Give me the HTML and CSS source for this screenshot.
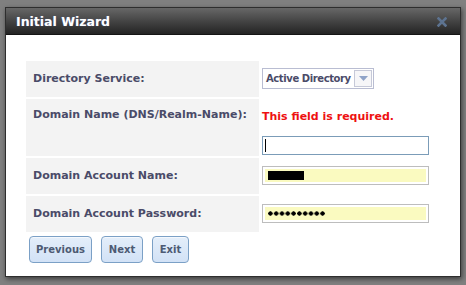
FILE: index.html
```html
<!DOCTYPE html>
<html>
<head>
<meta charset="utf-8">
<link rel="stylesheet" href="styles.css">
</head>
<body>
<div class="dialog">
  <div class="titlebar">
    <span class="title">Initial Wizard</span>
    <svg class="close" width="10" height="10" viewBox="0 0 10 10"><path d="M1.5 1.5 L8.5 8.5 M8.5 1.5 L1.5 8.5" stroke="#5d7390" stroke-width="2.6" stroke-linecap="square"/></svg>
  </div>
  <div class="body">
    <div class="form">
      <div class="label">Directory Service:</div>
      <div class="field f1">
        <div class="select"><span class="sel-text">Active Directory</span><span class="sel-btn"><svg width="9" height="5" viewBox="0 0 9 5"><path d="M0 0 H9 L4.5 5 Z" fill="#8fa3c8"/></svg></span></div>
      </div>
      <div class="label l2">Domain Name (DNS/Realm-Name):</div>
      <div class="field f2">
        <div class="error">This field is required.</div>
        <div class="input focus"><span class="caret"></span></div>
      </div>
      <div class="label">Domain Account Name:</div>
      <div class="field f3">
        <div class="input auto"><span class="inner"><span class="redact"></span></span></div>
      </div>
      <div class="label">Domain Account Password:</div>
      <div class="field f3">
        <div class="input auto"><span class="inner"><span class="dots" aria-label="••••••••••"></span></span></div>
      </div>
    </div>
    <div class="buttons">
      <button class="btn b-prev">Previous</button>
      <button class="btn b-next">Next</button>
      <button class="btn b-exit">Exit</button>
    </div>
  </div>
</div>
</body>
</html>
```
FILE: styles.css
```css
html, body { margin: 0; padding: 0; }
body {
  background: #808080;
  width: 466px;
  height: 285px;
  padding: 7px 0 0 5px;
  box-sizing: border-box;
  font-family: "DejaVu Sans", Verdana, sans-serif;
  overflow: hidden;
}
.dialog {
  width: 456px;
  height: 270px;
  background: #fff;
  border: 1px solid #2e2e2e;
  box-sizing: border-box;
  box-shadow: 1px 2px 5px rgba(0,0,0,0.55);
  display: flex;
  flex-direction: column;
}
.titlebar {
  height: 26px;
  background: linear-gradient(#676767, #414141 55%, #242424);
  border-bottom: 1px solid #151515;
  display: flex;
  align-items: center;
  justify-content: space-between;
  padding: 0 13px 0 10px;
}
.title {
  color: #fff;
  font-weight: bold;
  font-size: 12.5px;
  text-shadow: 0 0 1px rgba(120,150,255,0.5);
}
.close { display: block; margin-top: 1px; }
.body {
  padding: 26px 0 0 20px;
}
.form {
  display: grid;
  grid-template-columns: 233px 175px;
  grid-template-rows: 36px 57px 36px 36px;
  row-gap: 2px;
}
.label {
  background: #f3f3f3;
  color: #4a4b68;
  font-weight: bold;
  font-size: 11px;
  padding: 11px 7px 0;
  line-height: 14px;
}
.label.l2 { padding-top: 9px; }
.field { padding-left: 3px; }
.f1 { padding-top: 7px; }
.f2 { padding-top: 11px; }
.f3 { padding-top: 8px; }
.select {
  width: 112px;
  height: 21px;
  box-sizing: border-box;
  border: 1px solid #b9bdd2;
  display: flex;
  align-items: center;
  justify-content: space-between;
  padding: 0 1px 0 3px;
}
.sel-text {
  font-size: 10px;
  letter-spacing: -0.4px;
  font-weight: bold;
  color: #4a4b68;
  white-space: nowrap;
}
.sel-btn {
  width: 18px;
  height: 17px;
  box-sizing: border-box;
  border: 1px solid #c6c9d8;
  background: #f6f6f8;
  display: flex;
  align-items: center;
  justify-content: center;
}
.sel-btn svg { display: block; }
.error {
  color: #ee1111;
  font-weight: bold;
  font-size: 11px;
  line-height: 14px;
  height: 14px;
  margin-bottom: 12px;
}
.input {
  width: 167px;
  height: 19px;
  box-sizing: border-box;
  border: 1px solid #bdbdbd;
  background: #fff;
  display: flex;
  align-items: center;
}
.input.focus { border-color: #7b9cb8; }
.caret {
  display: block;
  width: 1px;
  height: 13px;
  background: #000;
  margin-left: 2px;
}
.input.auto { padding: 2px; }
.inner {
  flex: 1;
  height: 100%;
  background: #fafac0;
  display: flex;
  align-items: center;
  padding-left: 3px;
}
.redact {
  display: block;
  width: 36px;
  height: 9px;
  background: #000;
}
.dots {
  display: block;
  width: 58px;
  height: 5px;
  background: radial-gradient(circle at 2.4px 2.5px, #000 1.9px, transparent 2.4px) 0 0 / 5.8px 5px repeat-x;
}
.buttons {
  display: flex;
  gap: 9px;
  padding: 4px 0 0 3px;
}
.btn {
  height: 27px;
  box-sizing: border-box;
  border: 1px solid #7ba0c6;
  border-radius: 4px;
  background: linear-gradient(#e4eefa, #d2e2f6);
  color: #4d5a73;
  font-family: "DejaVu Sans", Verdana, sans-serif;
  font-weight: bold;
  font-size: 10px;
  padding: 0;
  box-shadow: inset 0 1px 0 #f4f8fd;
}
.b-prev { width: 63px; }
.b-next { width: 42px; }
.b-exit { width: 37px; }
```
